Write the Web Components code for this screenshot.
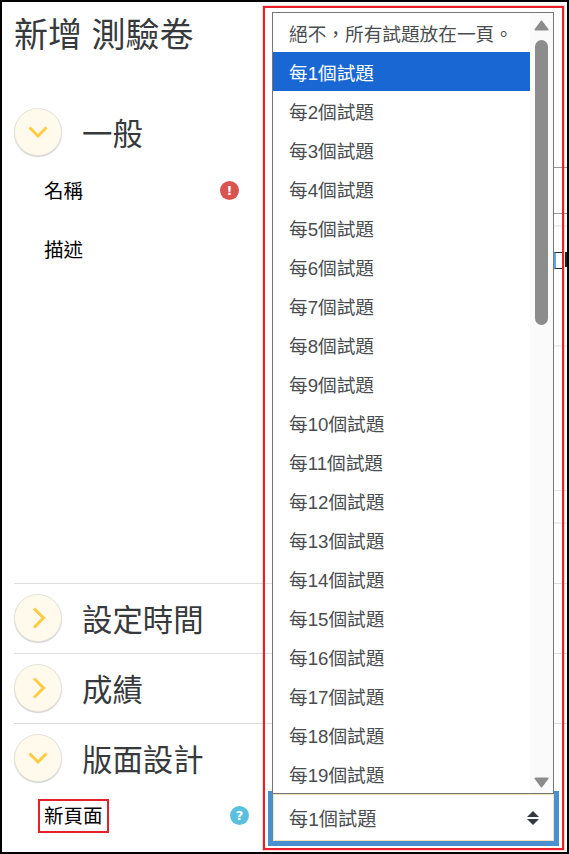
<!DOCTYPE html>
<html lang="zh-Hant">
<head>
<meta charset="utf-8">
<title>新增 測驗卷</title>
<style>
    html, body {
        margin: 0;
        padding: 0;
        background: #ffffff;
    }
    body {
        font-family: "Liberation Sans", "Noto Sans CJK TC", sans-serif;
    }
</style>
</head>
<body>
<quiz-page>
    <section-block heading="一般" open first height="475">
        <form-row label="名稱" badge="error" control="input"></form-row>
        <form-row label="描述" control="editor"></form-row>
    </section-block>
    <section-block heading="設定時間"></section-block>
    <section-block heading="成績"></section-block>
    <section-block heading="版面設計" open>
        <form-row label="新頁面" badge="help" marked></form-row>
    </section-block>
    <marked-box slot="overlay">
        <pages-dropdown></pages-dropdown>
    </marked-box>
</quiz-page>

<script>
class QuizPage extends HTMLElement {

    constructor() {
        super();
        this.shadowDOM = this.attachShadow({mode: "open"});
    }

    connectedCallback(){
        this.render();
    }

    render() {
        this.shadowDOM.innerHTML = `
        <style>
            :host {
                display: block;
                position: relative;
                box-sizing: border-box;
                width: 569px;
                height: 854px;
                border: 2px solid #000000;
                overflow: hidden;
                padding-left: 12px;
                background: #ffffff;
            }
            h2 {
                margin: 0;
                height: 106px;
                padding-top: 11px;
                box-sizing: border-box;
                font-size: 34px;
                line-height: 45px;
                font-weight: 400;
                color: #373a3c;
                white-space: nowrap;
            }
        </style>
        <h2>新增 測驗卷</h2>
        <slot></slot>
        <slot name="overlay"></slot>`;
    }
}

class SectionBlock extends HTMLElement {

    constructor() {
        super();
        this.shadowDOM = this.attachShadow({mode: "open"});
    }

    connectedCallback(){
        this.render();
    }

    render() {
        const open = this.hasAttribute("open");
        const first = this.hasAttribute("first");
        const height = this.getAttribute("height");
        const chevron = open
            ? `<polyline points="15.5,19.5 24,28 32.5,19.5"/>`
            : `<polyline points="20,14.5 29.5,24 20,33.5"/>`;
        this.shadowDOM.innerHTML = `
        <style>
            :host {
                display: block;
                box-sizing: border-box;
                border-top: ${first ? "0" : "1px solid #dedede"};
                ${height ? `height: ${height}px;` : ""}
            }
            header {
                display: flex;
                align-items: center;
                gap: 20px;
                height: 48px;
                padding: ${first ? "0" : "10px"} 0 11px;
            }
            .toggle {
                flex: none;
                box-sizing: border-box;
                width: 48px;
                height: 48px;
                border-radius: 50%;
                background: #fffaeb;
                border: 1px solid #e6e3da;
                box-shadow: 0 1px 1px rgba(0, 0, 0, 0.18);
            }
            svg {
                display: block;
                margin: -1px;
                fill: none;
                stroke: #ffcb45;
                stroke-width: 3;
            }
            h3 {
                margin: 0;
                height: 48px;
                font-size: 30.4px;
                line-height: 52px;
                font-weight: 400;
                color: #373a3c;
            }
            ::slotted(form-row:first-child) {
                margin-top: -6px;
            }
        </style>
        <header>
            <div class="toggle">
                <svg width="48" height="48" viewBox="0 0 48 48">${chevron}</svg>
            </div>
            <h3>${this.getAttribute("heading")}</h3>
        </header>
        <slot></slot>`;
    }
}

class FormRow extends HTMLElement {

    constructor() {
        super();
        this.shadowDOM = this.attachShadow({mode: "open"});
    }

    connectedCallback(){
        this.render();
    }

    render() {
        const badge = this.getAttribute("badge");
        const control = this.getAttribute("control");
        const badges = {
            error: `<span class="badge error">!</span>`,
            help: `<span class="badge help">?</span>`
        };
        const controls = {
            input: `<div class="input"></div>`,
            editor: `
                <div class="editor">
                    <div class="toolbar"><i></i><u></u></div>
                    <div class="body"></div>
                    <div class="status"></div>
                </div>`
        };
        this.shadowDOM.innerHTML = `
        <style>
            :host {
                display: flex;
                align-items: center;
                height: 59px;
                padding-left: 30px;
                font-size: 19.5px;
                color: #000000;
            }
            :host([marked]) {
                padding-left: 24px;
            }
            .text {
                flex: none;
                width: 176px;
                margin-top: -2px;
            }
            :host([marked]) .text {
                width: 192px;
            }
            :host([marked]) .label {
                display: inline-block;
                box-sizing: border-box;
                width: 71px;
                height: 34px;
                line-height: 30px;
                padding-left: 4px;
                border: 2px solid #e4212b;
                white-space: nowrap;
            }
            .badge {
                display: block;
                flex: none;
                width: 19px;
                height: 19px;
                margin-top: -1px;
                border-radius: 50%;
                color: #ffffff;
                font-size: 13px;
                font-weight: 700;
                line-height: 19px;
                text-align: center;
                font-family: "DejaVu Sans", sans-serif;
            }
            .error { background: #d9534f; }
            .help { background: #5bc0de; margin-top: -3px; }
            .input {
                flex: none;
                box-sizing: border-box;
                width: 400px;
                height: 47px;
                margin-left: 60px;
                border: 1px solid #9a9a9a;
            }
            .editor {
                flex: none;
                align-self: flex-start;
                width: 400px;
                margin: 5px 0 0 79px;
            }
            .toolbar {
                display: flex;
                gap: 2px;
                box-sizing: border-box;
                height: 122px;
                padding: 25px 0 0 255px;
                border-top: 2px solid #eeeeee;
                border-bottom: 2px solid #eeeeee;
            }
            .toolbar i {
                display: block;
                flex: none;
                box-sizing: border-box;
                width: 9px;
                height: 17px;
                border: 1px solid #222222;
                border-left: 2px solid #5aa9e6;
                border-right: 0;
            }
            .toolbar u {
                display: block;
                flex: none;
                width: 2px;
                height: 15px;
                background: #222222;
            }
            .body {
                height: 143px;
                border-bottom: 1px solid #e6e6e6;
            }
            .status {
                box-sizing: border-box;
                height: 33px;
                border-bottom: 2px solid #eeeeee;
            }
        </style>
        <div class="text"><span class="label">${this.getAttribute("label")}</span></div>
        ${badges[badge] || ""}
        ${controls[control] || ""}`;
    }
}

class MarkedBox extends HTMLElement {

    constructor() {
        super();
        this.shadowDOM = this.attachShadow({mode: "open"});
    }

    connectedCallback(){
        this.render();
    }

    render() {
        this.shadowDOM.innerHTML = `
        <style>
            :host {
                display: block;
                position: absolute;
                left: 261px;
                top: 4px;
                box-sizing: border-box;
                width: 301px;
                height: 844px;
                padding: 4px 0 0 3px;
                border: 2px solid #e8202a;
                box-shadow: 0 0 0 1px rgba(232, 32, 42, 0.18);
            }
        </style>
        <slot></slot>`;
    }
}

class PagesDropdown extends HTMLElement {

    constructor() {
        super();
        this.shadowDOM = this.attachShadow({mode: "open"});
    }

    connectedCallback(){
        this.render();
    }

    render() {
        const items = ["絕不，所有試題放在一頁。"];
        for (let i = 1; i <= 19; i++) {
            items.push(`每${i}個試題`);
        }
        const options = items.map((item, i) =>
            `<li class="${i === 1 ? "selected" : ""}">${item}</li>`).join("");
        this.shadowDOM.innerHTML = `
        <style>
            :host {
                display: block;
                width: 291px;
                color: #4a4d50;
            }
            .list {
                position: relative;
                z-index: 1;
                display: flex;
                box-sizing: border-box;
                width: 282px;
                height: 782px;
                margin-left: 4px;
                border: 1px solid #767676;
                background: #ffffff;
            }
            ul {
                flex: 1;
                margin: 0;
                padding: 0;
                list-style: none;
                font-size: 18.67px;
            }
            li {
                height: 39px;
                line-height: 43px;
                padding-left: 16px;
                white-space: nowrap;
            }
            li.selected {
                background: #1967d2;
                color: #ffffff;
            }
            .scrollbar {
                flex: none;
                width: 23px;
                background: #fafafa;
                display: flex;
                flex-direction: column;
                align-items: center;
            }
            .scrollbar svg {
                display: block;
                flex: none;
                fill: #8c8c8c;
                stroke: #8c8c8c;
                stroke-width: 2;
                stroke-linejoin: round;
            }
            .up { margin: 7px 0 9px; }
            .thumb {
                flex: none;
                width: 13px;
                height: 285px;
                border-radius: 7px;
                background: #8c8c8c;
            }
            .down { margin-top: auto; margin-bottom: 5px; }
            .field {
                display: flex;
                align-items: center;
                justify-content: space-between;
                box-sizing: border-box;
                height: 55px;
                margin-top: -3px;
                padding: 2px 15px 1px 16px;
                border: 5px solid #4a90d0;
                border-top-width: 3px;
                box-shadow: inset 0 0 0 1px #efe3bd;
                background: #ffffff;
                font-size: 19.2px;
            }
            .field svg {
                display: block;
                fill: #343a40;
            }
        </style>
        <div class="list">
            <ul>${options}</ul>
            <div class="scrollbar">
                <svg class="up" width="15" height="11" viewBox="0 0 15 11"><polygon points="7.5,1.5 13.5,9.5 1.5,9.5"/></svg>
                <div class="thumb"></div>
                <svg class="down" width="15" height="11" viewBox="0 0 15 11"><polygon points="1.5,1.5 13.5,1.5 7.5,9.5"/></svg>
            </div>
        </div>
        <div class="field">
            <span>每1個試題</span>
            <svg width="12" height="14" viewBox="0 0 12 14"><polygon points="6,0 12,6 0,6"/><polygon points="0,8 12,8 6,14"/></svg>
        </div>`;
    }
}

customElements.define("quiz-page", QuizPage);
customElements.define("section-block", SectionBlock);
customElements.define("form-row", FormRow);
customElements.define("marked-box", MarkedBox);
customElements.define("pages-dropdown", PagesDropdown);
</script>
</body>
</html>
